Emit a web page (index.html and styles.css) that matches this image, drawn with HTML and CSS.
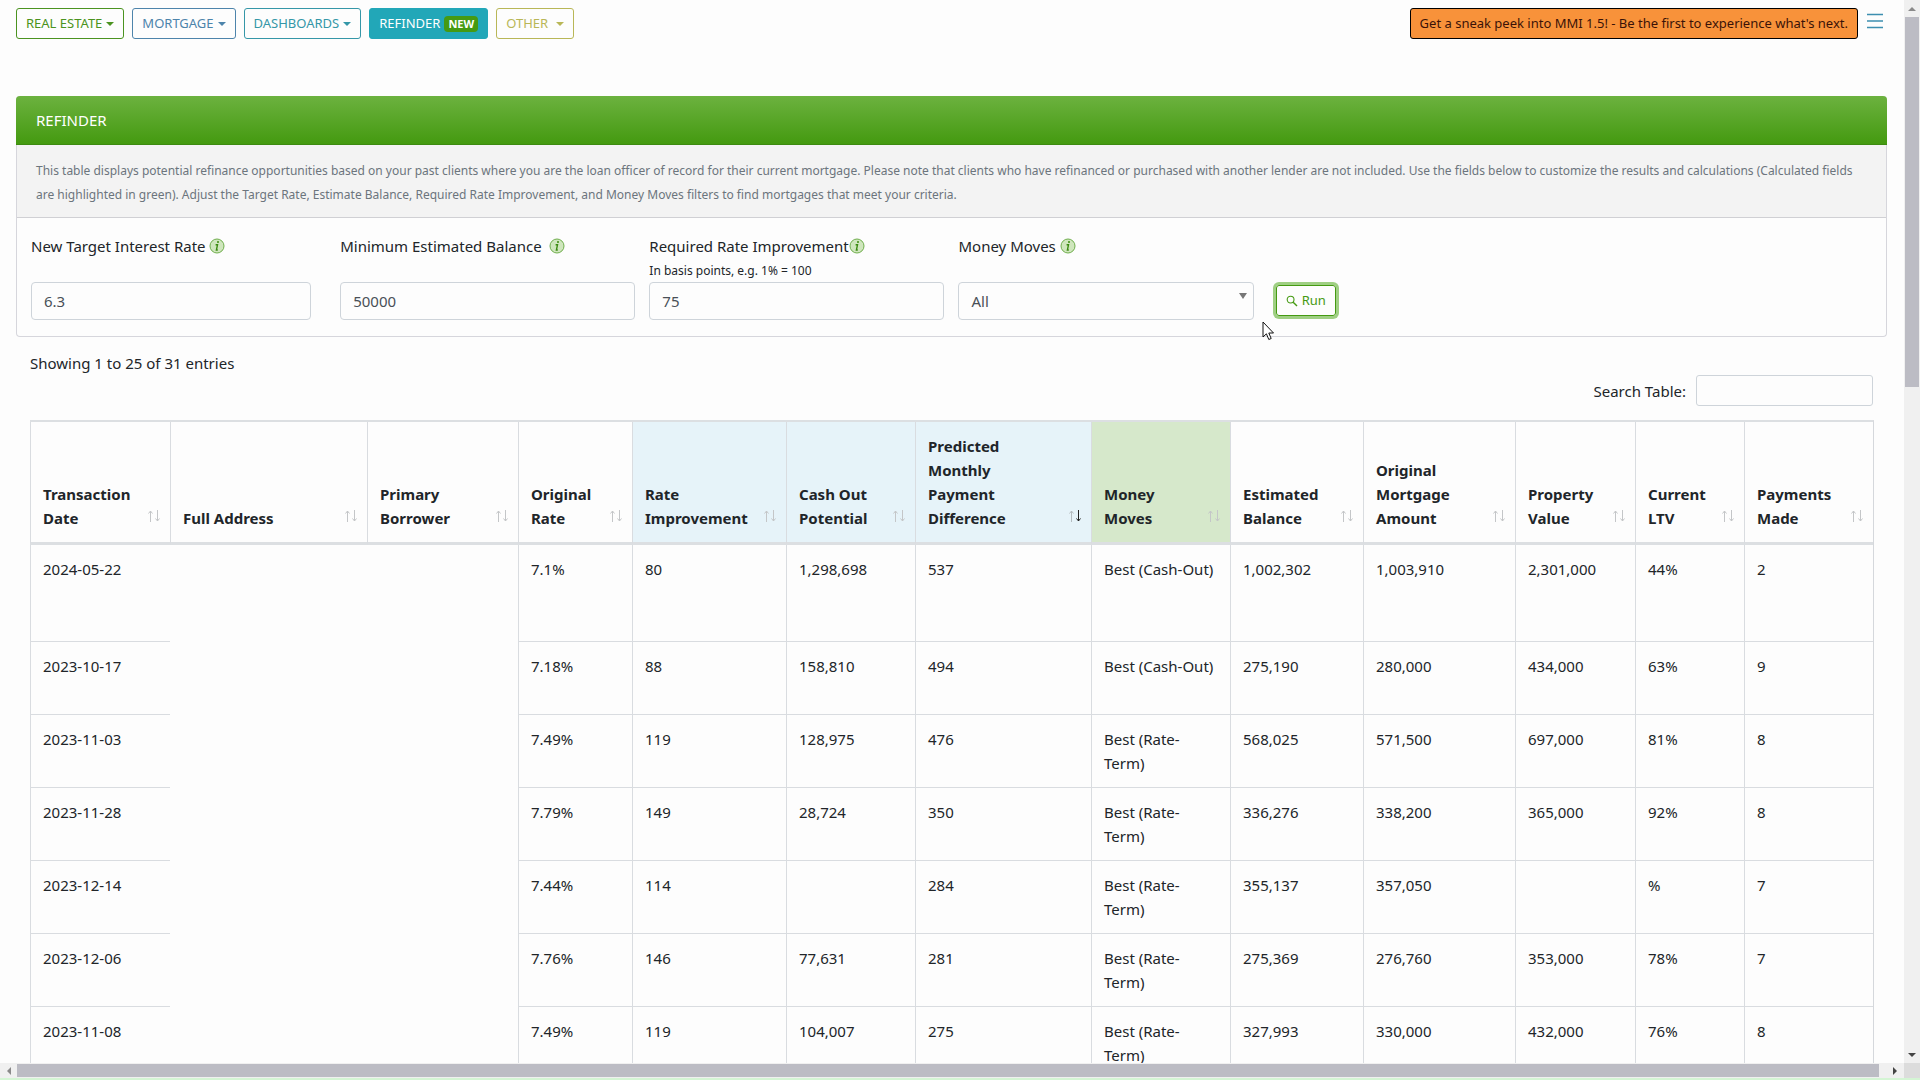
FILE: index.html
```
<!DOCTYPE html>
<html lang="en">
<head>
    <meta charset="UTF-8">
    <meta name="viewport" content="width=device-width, initial-scale=1.0">
    <title>Refinder</title>
    <link rel="stylesheet" href="styles.css">
</head>
<body>
    <svg class="sprite" aria-hidden="true">
        <symbol id="info" viewBox="0 0 16 16">
            <circle cx="8" cy="8" r="7" fill="#cfe6bd" stroke="#6fae4c"/>
            <circle cx="9" cy="4" r="1" fill="#3c8a12"/>
            <path d="M6.6 6.8h1.9L7.4 12h1.4" fill="none" stroke="#3c8a12" stroke-width="1.4"/>
        </symbol>
    </svg>

    <div class="window">
        <div class="page">
            <nav class="navbar">
                <button class="btn btn-green" type="button">REAL ESTATE<span class="caret"></span></button>
                <button class="btn btn-blue" type="button">MORTGAGE<span class="caret"></span></button>
                <button class="btn btn-teal" type="button">DASHBOARDS<span class="caret"></span></button>
                <a class="btn btn-active" href="#">REFINDER <span class="badge">NEW</span></a>
                <button class="btn btn-olive" type="button">OTHER <span class="caret caret-wide"></span></button>
                <a class="btn btn-promo" href="#">Get a sneak peek into MMI 1.5! - Be the first to experience what's next.</a>
                <button class="menu" type="button" aria-label="Menu">
                    <svg width="18" height="16" viewBox="0 0 18 16"><path d="M1 1.5h16M1 8h16M1 14.5h16" stroke="#3d8fb0" stroke-width="1.6"/></svg>
                </button>
            </nav>

            <section class="card">
                <h1 class="card-header">REFINDER</h1>
                <p class="card-intro">This table displays potential refinance opportunities based on your past clients where you are the loan officer of record for their current mortgage. Please note that clients who have refinanced or purchased with another lender are not included. Use the fields below to customize the results and calculations (Calculated fields are highlighted in green). Adjust the Target Rate, Estimate Balance, Required Rate Improvement, and Money Moves filters to find mortgages that meet your criteria.</p>
                <form class="filters">
                    <div class="field field-first">
                        <label for="rate">New Target Interest Rate <svg class="info"><use href="#info"/></svg></label>
                        <input id="rate" type="text" value="6.3">
                    </div>
                    <div class="field">
                        <label for="balance">Minimum Estimated Balance &nbsp;<svg class="info"><use href="#info"/></svg></label>
                        <input id="balance" type="text" value="50000">
                    </div>
                    <div class="field">
                        <label for="improvement">Required Rate Improvement<svg class="info"><use href="#info"/></svg></label>
                        <small>In basis points, e.g. 1% = 100</small>
                        <input id="improvement" type="text" value="75">
                    </div>
                    <div class="field">
                        <label for="moves">Money Moves <svg class="info"><use href="#info"/></svg></label>
                        <div class="select">
                            <select id="moves"><option>All</option></select>
                        </div>
                    </div>
                    <div class="run">
                        <button class="btn btn-run" type="button">
                            <svg width="12" height="12" viewBox="0 0 12 12"><circle cx="4.6" cy="4.6" r="3.4" fill="none" stroke="currentColor" stroke-width="1.1"/><path d="M7.2 7.2l3.8 3.8" stroke="currentColor" stroke-width="1.4"/></svg>
                            Run
                        </button>
                        <svg class="pointer" width="13" height="20" viewBox="0 0 13 20"><path d="M1 1v15l3.4-3.2 2.4 5.7 2.4-1-2.4-5.5h4.7z" fill="#fff" stroke="#111"/></svg>
                    </div>
                </form>
            </section>

            <section class="results">
                <div class="count">Showing 1 to 25 of 31 entries</div>
                <div class="search">
                    <label for="search">Search Table:</label>
                    <input id="search" type="search">
                </div>
                <table>
                    <colgroup>
                        <col class="w-date"><col class="w-address"><col class="w-borrower"><col class="w-rate"><col class="w-improve"><col class="w-cash"><col class="w-diff">
                        <col class="w-moves"><col class="w-balance"><col class="w-amount"><col class="w-value"><col class="w-ltv"><col class="w-made">
                    </colgroup>
                    <thead>
                        <tr>
                            <th>Transaction Date</th>
                            <th>Full Address</th>
                            <th>Primary Borrower</th>
                            <th>Original Rate</th>
                            <th class="calc">Rate Improvement</th>
                            <th class="calc">Cash Out Potential</th>
                            <th class="calc sorted">Predicted Monthly Payment Difference</th>
                            <th class="moves">Money Moves</th>
                            <th>Estimated Balance</th>
                            <th>Original Mortgage Amount</th>
                            <th>Property Value</th>
                            <th>Current LTV</th>
                            <th>Payments Made</th>
                        </tr>
                    </thead>
                    <tbody>
                        <tr class="tall"><td>2024-05-22</td><td class="blank"></td><td class="blank"></td><td>7.1%</td><td>80</td><td>1,298,698</td><td>537</td><td>Best (Cash-Out)</td><td>1,002,302</td><td>1,003,910</td><td>2,301,000</td><td>44%</td><td>2</td></tr>
                        <tr><td>2023-10-17</td><td class="blank"></td><td class="blank"></td><td>7.18%</td><td>88</td><td>158,810</td><td>494</td><td>Best (Cash-Out)</td><td>275,190</td><td>280,000</td><td>434,000</td><td>63%</td><td>9</td></tr>
                        <tr><td>2023-11-03</td><td class="blank"></td><td class="blank"></td><td>7.49%</td><td>119</td><td>128,975</td><td>476</td><td>Best (Rate-Term)</td><td>568,025</td><td>571,500</td><td>697,000</td><td>81%</td><td>8</td></tr>
                        <tr><td>2023-11-28</td><td class="blank"></td><td class="blank"></td><td>7.79%</td><td>149</td><td>28,724</td><td>350</td><td>Best (Rate-Term)</td><td>336,276</td><td>338,200</td><td>365,000</td><td>92%</td><td>8</td></tr>
                        <tr><td>2023-12-14</td><td class="blank"></td><td class="blank"></td><td>7.44%</td><td>114</td><td></td><td>284</td><td>Best (Rate-Term)</td><td>355,137</td><td>357,050</td><td></td><td>%</td><td>7</td></tr>
                        <tr><td>2023-12-06</td><td class="blank"></td><td class="blank"></td><td>7.76%</td><td>146</td><td>77,631</td><td>281</td><td>Best (Rate-Term)</td><td>275,369</td><td>276,760</td><td>353,000</td><td>78%</td><td>7</td></tr>
                        <tr><td>2023-11-08</td><td class="blank"></td><td class="blank"></td><td>7.49%</td><td>119</td><td>104,007</td><td>275</td><td>Best (Rate-Term)</td><td>327,993</td><td>330,000</td><td>432,000</td><td>76%</td><td>8</td></tr>
                    </tbody>
                </table>
            </section>
        </div>

        <div class="bar bar-y">
            <span class="arrow arrow-up"></span>
            <div class="track"><div class="thumb"></div></div>
            <span class="arrow arrow-down"></span>
        </div>
        <div class="bar bar-x">
            <span class="arrow arrow-left"></span>
            <div class="track"><div class="thumb"></div></div>
            <span class="arrow arrow-right"></span>
        </div>
        <div class="corner"></div>
    </div>
</body>
</html>
```

FILE: styles.css
```
* {
    margin: 0;
    padding: 0;
    box-sizing: border-box;
}

body {
    font-family: "Segoe UI", "Noto Sans", "Open Sans", sans-serif;
    font-size: 15px;
    line-height: 24px;
    color: #212529;
    background-color: #fdfdfd;
}

input,
select,
button {
    font: inherit;
}

.sprite {
    display: none;
}

/* window frame with scrollbars */
.window {
    display: grid;
    grid-template-columns: minmax(0, 1fr) 16px;
    grid-template-rows: minmax(0, 1fr) 15px;
    height: 100vh;
    border-bottom: 2px solid #d4f5d4;
}

.page {
    overflow: hidden;
    padding: 8px 17px 0 16px;
}

/* top navigation */
.navbar {
    display: flex;
    align-items: center;
    gap: 8px;
    margin-bottom: 57px;
}

.btn {
    display: flex;
    align-items: center;
    height: 31px;
    padding: 0 9px;
    border: 1px solid;
    border-radius: 3px;
    background-color: transparent;
    font-size: 13px;
    line-height: 21px;
    white-space: nowrap;
    text-decoration: none;
}

.btn-green {
    color: #4b9320;
}

.btn-blue {
    color: #4d84ab;
}

.btn-teal {
    color: #3597a8;
}

.btn-active {
    color: #fff;
    background-color: #22a7b8;
    border-color: #22a7b8;
}

.btn-olive {
    color: #b9b757;
}

.btn-promo {
    margin-left: auto;
    color: #3a1208;
    background-color: #f8923a;
    border-color: #000;
}

.caret {
    margin-left: 4px;
    border: 4px solid transparent;
    border-top-color: currentColor;
    border-bottom: 0;
}

.caret-wide {
    margin-left: 8px;
}

.badge {
    margin-left: 4px;
    padding: 0 4px;
    border-radius: 4px;
    background-color: #459a12;
    font-size: 11px;
    font-weight: 700;
    line-height: 16px;
}

.menu {
    height: 29px;
    margin-right: 3px;
    align-self: flex-start;
    border: none;
    background: none;
}

/* filter card */
.card {
    border: 1px solid #d6d6dc;
    border-top: 0;
    border-radius: 4px;
}

.card-header {
    margin: 0 -1px;
    padding: 12px 20px;
    border-bottom: 1px solid #3d8a10;
    border-radius: 4px 4px 0 0;
    background: linear-gradient(#6cb23f, #449a10);
    color: #fff;
    font-size: 15px;
    font-weight: 400;
}

.card-intro {
    padding: 14px 19px 10px;
    border-bottom: 1px solid #d0d0d4;
    background-color: #f3f3f3;
    color: #6c757d;
    font-size: 12px;
}

.filters {
    display: grid;
    grid-template-columns: repeat(6, 1fr);
    align-items: end;
    padding: 16px 14px 16px 0;
}

.field {
    display: flex;
    flex-direction: column;
    height: 86px;
    padding-left: 14px;
}

.field-first {
    padding-right: 15px;
}

.field label {
    display: flex;
    align-items: center;
    white-space: pre;
}

.field small {
    padding-top: 2px;
    font-size: 12px;
    line-height: 22px;
}

.field input,
.select {
    height: 38px;
    margin-top: auto;
    border: 1px solid #ced4da;
    border-radius: 4px;
    background-color: #fdfdfd;
}

.field input,
.select select {
    width: 100%;
    padding: 0 12px;
    color: #495057;
}

.info {
    width: 16px;
    height: 16px;
}

.select {
    display: flex;
    align-items: center;
    padding-right: 6px;
}

.select select {
    border: none;
    background: none;
    appearance: none;
}

.select::after {
    content: "";
    margin-bottom: 10px;
    border: 4px solid transparent;
    border-top: 6px solid #777;
    border-bottom: 0;
}

.run {
    position: relative;
    padding: 0 0 4px 22px;
}

.btn-run {
    gap: 4px;
    color: #459a12;
    box-shadow: 0 0 0 3px #9fcf83;
}

.pointer {
    position: absolute;
    left: 8px;
    top: 36px;
}

/* results */
.results {
    padding: 14px 14px 0;
}

.search {
    display: flex;
    justify-content: flex-end;
    align-items: center;
    gap: 10px;
    margin-bottom: 14px;
}

.search input {
    width: 177px;
    height: 31px;
    border: 1px solid #ced4da;
    border-radius: 3px;
    background-color: #fdfdfd;
}

table {
    width: 100%;
    table-layout: fixed;
    border-collapse: separate;
    border-spacing: 0;
    border-right: 1px solid #d5d8dc;
    border-top: 2px solid #dcdfe2;
}

th,
td {
    padding: 12px;
    border-left: 1px solid #d9dce0;
    text-align: left;
}

th {
    padding-right: 30px;
    border-bottom: 3px solid #dcdfe2;
    vertical-align: bottom;
    background: url("data:image/svg+xml,%3Csvg xmlns='http://www.w3.org/2000/svg' width='14' height='12' fill='none' stroke='%23c4c6c8'%3E%3Cpath d='M3.5 12V1M1.5 3.5l2-2.5 2 2.5M10.5 0v11M8.5 8.5l2 2.5 2-2.5'/%3E%3C/svg%3E") no-repeat right 9px bottom 20px;
}

th.calc {
    background-color: #e6f3f9;
}

th.sorted {
    background-image: url("data:image/svg+xml,%3Csvg xmlns='http://www.w3.org/2000/svg' width='14' height='12' fill='none' stroke='%23b4bcc0'%3E%3Cpath d='M3.5 12V1M1.5 3.5l2-2.5 2 2.5'/%3E%3Cpath d='M10.5 0v11M8.5 8.5l2 2.5 2-2.5' stroke='%23222'/%3E%3C/svg%3E");
}

th.moves {
    background-color: #d6e8cb;
}

td {
    height: 73px;
    border-bottom: 1px solid #d9dce0;
    vertical-align: top;
}

.tall td {
    height: 97px;
}

td.blank {
    border-color: transparent;
}

.w-date { width: 140px; }
.w-address { width: 197px; }
.w-borrower { width: 151px; }
.w-rate { width: 114px; }
.w-improve { width: 154px; }
.w-cash { width: 129px; }
.w-diff { width: 176px; }
.w-moves { width: 139px; }
.w-balance { width: 133px; }
.w-amount { width: 152px; }
.w-value { width: 120px; }
.w-ltv { width: 109px; }
.w-made { width: 129px; }

/* scrollbars */
.bar {
    display: flex;
    background-color: #f0f0f0;
}

.bar-y {
    flex-direction: column;
}

.track {
    flex: 1;
}

.thumb {
    background-color: #bcbcc4;
}

.bar-y .thumb {
    height: 36%;
    margin: 0 1px;
}

.bar-x .thumb {
    height: 13px;
    margin-top: 1px;
}

.arrow {
    display: flex;
    align-items: center;
    justify-content: center;
    width: 16px;
    height: 17px;
}

.bar-x .arrow {
    width: 17px;
    height: 15px;
}

.bar-x .arrow-right {
    width: 25px;
    padding-left: 6px;
}

.arrow::before {
    content: "";
    border: 4px solid transparent;
}

.arrow-up::before {
    border-top: 0;
    border-bottom-color: #8a8a8a;
}

.arrow-down::before {
    border-bottom: 0;
    border-top-color: #444;
}

.arrow-left::before {
    border-left: 0;
    border-right-color: #8a8a8a;
}

.arrow-right::before {
    border-right: 0;
    border-left-color: #444;
}

.corner {
    background-color: #dcdcdc;
}
```
